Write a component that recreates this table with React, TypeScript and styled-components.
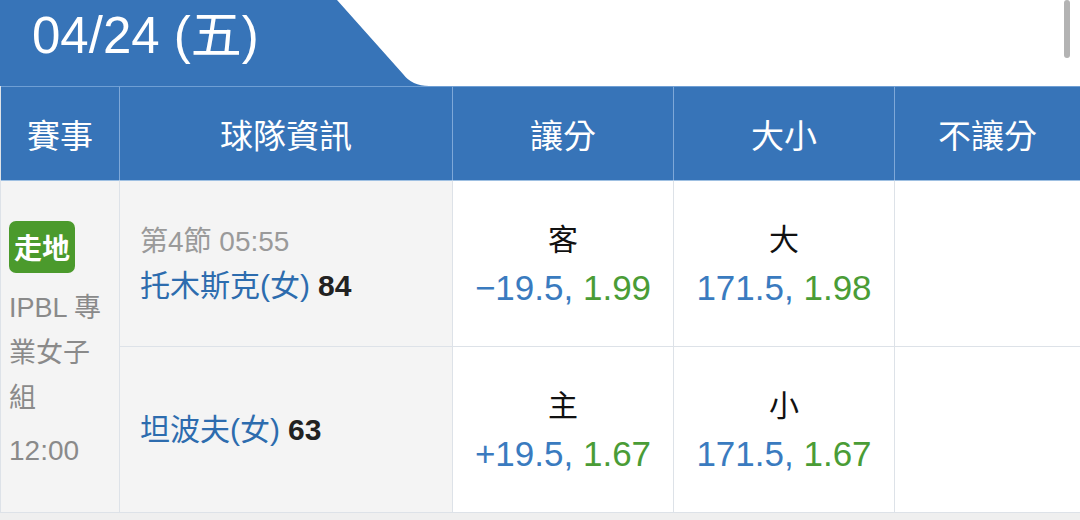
import { Fragment } from 'react';
import styled, { createGlobalStyle } from 'styled-components';

const GlobalStyle = createGlobalStyle`
  html, body {
    margin: 0;
    padding: 0;
    background: #ffffff;
    font-family: "Liberation Sans", "Noto Sans CJK TC", sans-serif;
  }
`;

const BLUE = '#3774b8';
const LINE = '#dde2e8';

interface Odds {
  side: string;
  line: string;
  price: string;
}

interface TeamRow {
  clock?: string;
  team: string;
  score: number;
  spread: Odds;
  total: Odds;
}

const rows: TeamRow[] = [
  {
    clock: '第4節 05:55',
    team: '托木斯克(女)',
    score: 84,
    spread: { side: '客', line: '−19.5', price: '1.99' },
    total: { side: '大', line: '171.5', price: '1.98' },
  },
  {
    team: '坦波夫(女)',
    score: 63,
    spread: { side: '主', line: '+19.5', price: '1.67' },
    total: { side: '小', line: '171.5', price: '1.67' },
  },
];

const Page = styled.div`
  position: relative;
  width: 1080px;
  height: 520px;
  overflow: hidden;
  background: #ffffff;
`;

const TabBar = styled.div`
  display: flex;
  height: 86px;
`;

const DateTab = styled.div`
  width: 305px;
  padding: 7px 0 0 32px;
  background: ${BLUE};
  color: #ffffff;
  font-size: 51px;
  line-height: 58px;
  white-space: nowrap;
`;

const Slant = styled.svg`
  display: block;
  flex: none;
`;

const ScrollThumb = styled.div`
  position: absolute;
  top: 0;
  right: 10px;
  width: 6px;
  height: 58px;
  border-radius: 3px;
  background: #b3b3b3;
`;

const Table = styled.div`
  display: grid;
  grid-template-columns: 119px 333px 221px 221px 1fr;
  grid-template-rows: 94px 167px 166px;
  border-left: 1px solid ${LINE};
`;

const HeadCell = styled.div<{ $last?: boolean }>`
  display: flex;
  align-items: center;
  justify-content: center;
  background: ${BLUE};
  color: #ffffff;
  font-size: 33px;
  border-right: ${(p) => (p.$last ? 'none' : '1px solid #7ea8d8')};
  border-top: 1px solid #6f9fd4;
`;

const LeagueCell = styled.div`
  grid-row: span 2;
  display: flex;
  flex-direction: column;
  justify-content: center;
  padding: 0 8px;
  background: #f4f4f4;
  border-right: 1px solid ${LINE};
  border-top: 1px solid #9fc0e2;
  border-bottom: 1px solid ${LINE};
`;

const LiveBadge = styled.div`
  width: 66px;
  height: 52px;
  margin-bottom: 13px;
  border-radius: 7px;
  background: #4b9a2c;
  color: #ffffff;
  font-size: 28px;
  font-weight: 700;
  display: flex;
  align-items: center;
  justify-content: center;
`;

const LeagueName = styled.div`
  width: 104px;
  color: #8a8a8a;
  font-size: 27px;
  line-height: 45px;
`;

const KickOff = styled.div`
  margin-top: 7px;
  color: #8a8a8a;
  font-size: 28px;
  line-height: 45px;
`;

const Cell = styled.div<{ $shade?: boolean; $first?: boolean; $last?: boolean }>`
  display: flex;
  flex-direction: column;
  justify-content: center;
  background: ${(p) => (p.$shade ? '#f4f4f4' : '#ffffff')};
  border-right: ${(p) => (p.$last ? 'none' : '1px solid ' + LINE)};
  border-bottom: 1px solid ${LINE};
  border-top: ${(p) => (p.$first ? '1px solid #9fc0e2' : 'none')};
`;

const TeamCell = styled(Cell)`
  padding-left: 20px;
`;

const Clock = styled.div`
  color: #9a9a9a;
  font-size: 28px;
  line-height: 44px;
`;

const TeamLine = styled.div`
  font-size: 30px;
  line-height: 44px;
  white-space: nowrap;
`;

const TeamName = styled.span`
  color: #2d6cae;
`;

const Score = styled.span`
  margin-left: 8px;
  color: #222222;
  font-weight: 700;
`;

const OddsCell = styled(Cell)`
  align-items: center;
`;

const Side = styled.div`
  color: #111111;
  font-size: 30px;
  line-height: 48px;
`;

const OddsLine = styled.div`
  font-size: 35px;
  line-height: 48px;
  white-space: nowrap;
`;

const Handicap = styled.span`
  color: #3a7bbf;
`;

const Price = styled.span`
  color: #4a9c36;
`;

const Footer = styled.div`
  height: 8px;
  background: #efefef;
`;

function OddsBox({ odds, first }: { odds: Odds; first: boolean }) {
  return (
    <OddsCell $first={first}>
      <Side>{odds.side}</Side>
      <OddsLine>
        <Handicap>{odds.line}, </Handicap>
        <Price>{odds.price}</Price>
      </OddsLine>
    </OddsCell>
  );
}

export default function App() {
  return (
    <Page>
      <GlobalStyle />
      <TabBar>
        <DateTab>04/24 (五)</DateTab>
        <Slant width="92" height="86" viewBox="0 0 92 86">
          <path d="M0 0 L66 74 Q75 86 92 86 H0 Z" fill={BLUE} />
        </Slant>
      </TabBar>
      <ScrollThumb />

      <Table>
        <HeadCell>賽事</HeadCell>
        <HeadCell>球隊資訊</HeadCell>
        <HeadCell>讓分</HeadCell>
        <HeadCell>大小</HeadCell>
        <HeadCell $last>不讓分</HeadCell>

        <LeagueCell>
          <LiveBadge>走地</LiveBadge>
          <LeagueName>IPBL 專業女子組</LeagueName>
          <KickOff>12:00</KickOff>
        </LeagueCell>

        {rows.map((r, i) => (
          <Fragment key={i}>
            <TeamCell $shade $first={i === 0}>
              {r.clock && <Clock>{r.clock}</Clock>}
              <TeamLine>
                <TeamName>{r.team}</TeamName>
                <Score>{r.score}</Score>
              </TeamLine>
            </TeamCell>
            <OddsBox odds={r.spread} first={i === 0} />
            <OddsBox odds={r.total} first={i === 0} />
            <Cell $first={i === 0} $last />
          </Fragment>
        ))}
      </Table>
      <Footer />
    </Page>
  );
}
